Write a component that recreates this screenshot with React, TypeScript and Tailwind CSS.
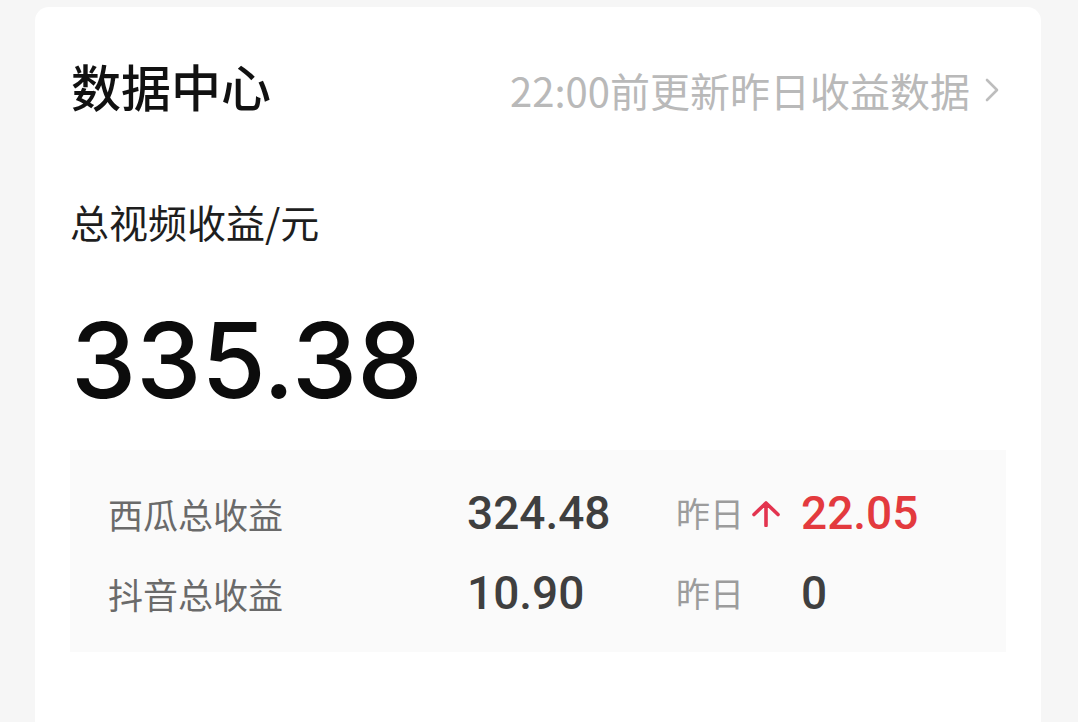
import React from "react";

const cjk = { fontFamily: '"Noto Sans CJK SC", "Noto Sans", sans-serif' };
const num = { fontFamily: 'Roboto, "Noto Sans CJK SC", sans-serif' };
const big = { fontFamily: 'Inter, Roboto, sans-serif' };

function Row({ label, value, delta, up }: { label: string; value: string; delta: string; up?: boolean }) {
  return (
    <div className="flex h-[80px] items-center">
      <div className="w-[359px] text-[35px] leading-none text-[#6a6a6a]" style={cjk}>
        {label}
      </div>
      <div className="w-[209px] text-[46px] font-medium leading-none text-[#3f3f3f]" style={num}>
        {value}
      </div>
      <div className="flex w-[125px] items-center">
        <span className="text-[34px] leading-none text-[#9c9c9c]" style={cjk}>
          昨日
        </span>
        {up && (
          <svg className="ml-[7px]" width="30" height="27" viewBox="0 0 30 27" fill="none">
            <path d="M15 25.5V3 M3 14.5L15 3L27 14.5" stroke="#e3344f" strokeWidth="3.6" strokeLinecap="round" strokeLinejoin="round" />
          </svg>
        )}
      </div>
      <div
        className={`text-[46px] font-medium leading-none ${up ? "text-[#e33a3e]" : "text-[#3f3f3f]"}`}
        style={num}
      >
        {delta}
      </div>
    </div>
  );
}

export default function App() {
  return (
    <div className="h-[722px] w-[1078px] overflow-hidden bg-[#f6f6f6] pl-[35px] pt-[7px]">
      <div className="h-[760px] w-[1006px] rounded-[14px] bg-white px-[35px] pt-[53px]">
        <div className="flex h-[60px] items-baseline justify-between">
          <div className="pl-[1px] text-[50px] font-medium leading-none text-[#111]" style={cjk}>
            数据中心
          </div>
          <div className="flex items-center pr-[5px] text-[40px] leading-none text-[#b9b9b9]" style={cjk}>
            <span>22:00前更新昨日收益数据</span>
            <svg className="ml-[13px]" width="18" height="26" viewBox="0 0 18 26" fill="none">
              <path d="M4 3L14 13L4 23" stroke="#bdbdbd" strokeWidth="2.6" strokeLinecap="round" strokeLinejoin="round" />
            </svg>
          </div>
        </div>
        <div className="mt-[82px] text-[39px] leading-none text-[#1e1e1e]" style={cjk}>
          总视频收益/元
        </div>
        <div className="mt-[67px] pl-[1px] text-[104px] font-medium leading-none text-[#0c0c0c]" style={big}>
          335.38
        </div>
        <div className="mt-[38px] h-[202px] w-[936px] bg-[#fafafa] pl-[38px] pt-[23px]">
          <Row label="西瓜总收益" value="324.48" delta="22.05" up />
          <Row label="抖音总收益" value="10.90" delta="0" />
        </div>
      </div>
    </div>
  );
}
